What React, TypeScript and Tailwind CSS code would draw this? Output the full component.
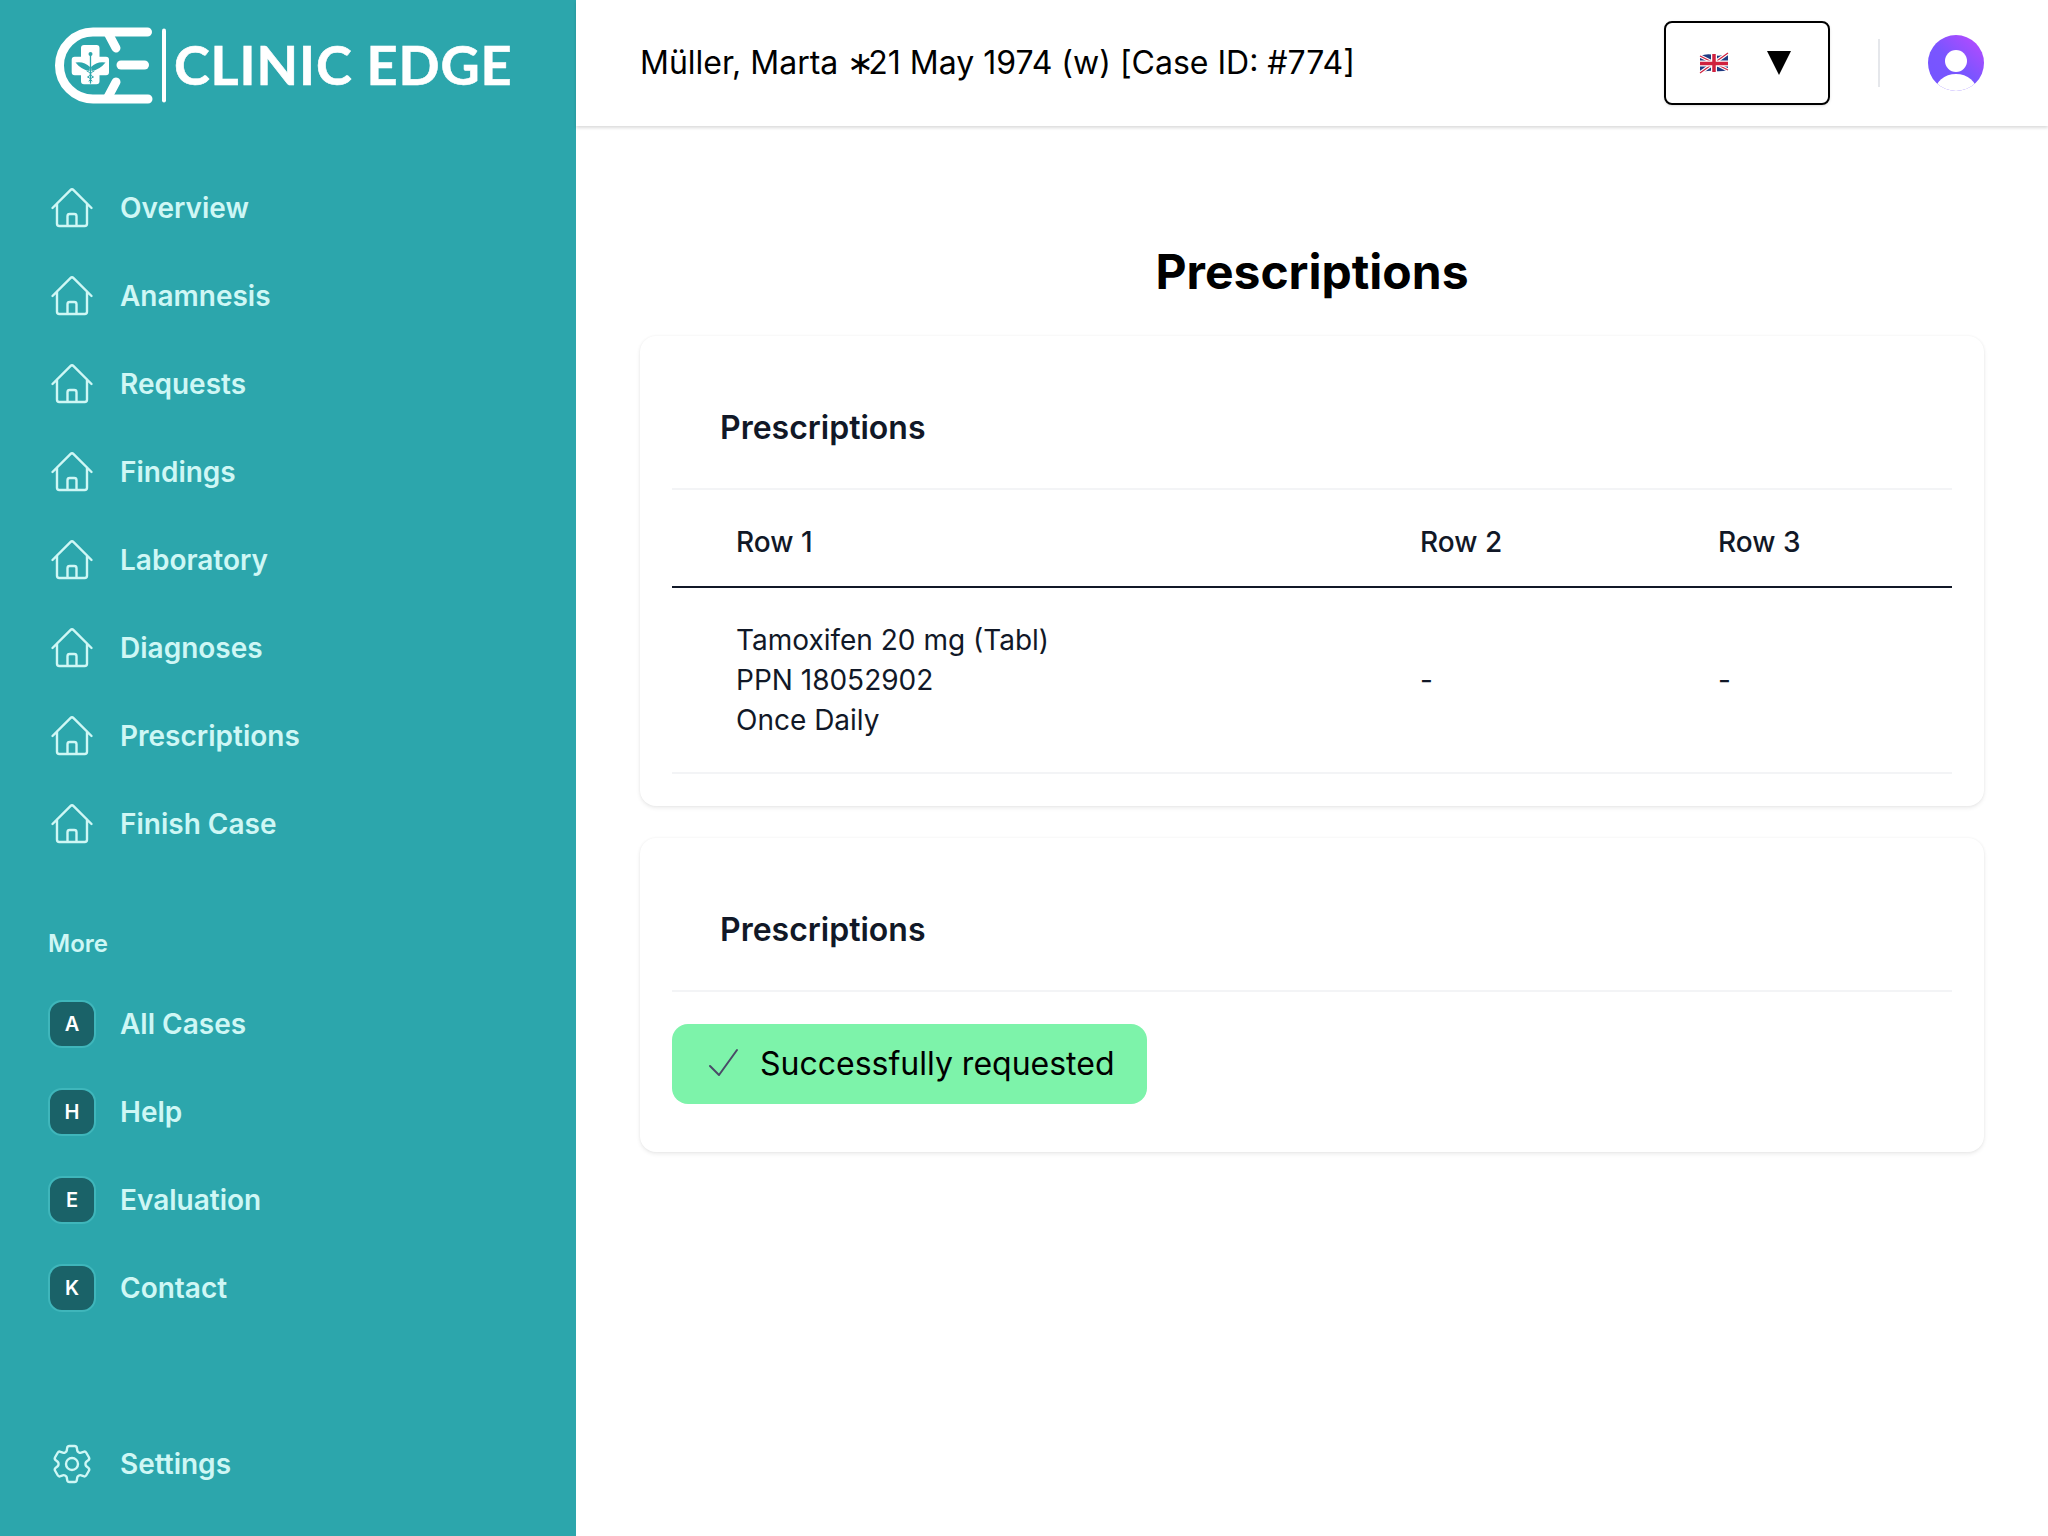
import React from 'react';
import { HiOutlineHome, HiOutlineCog6Tooth } from 'react-icons/hi2';

const mainNav = ['Overview', 'Anamnesis', 'Requests', 'Findings', 'Laboratory', 'Diagnoses', 'Prescriptions', 'Finish Case'];
const moreNav = [
  { letter: 'A', label: 'All Cases' },
  { letter: 'H', label: 'Help' },
  { letter: 'E', label: 'Evaluation' },
  { letter: 'K', label: 'Contact' },
];

function Logo() {
  return (
    <svg width="116" height="78" viewBox="52 26 116 78" className="shrink-0">
      <g fill="none" stroke="#fff" strokeWidth="9" strokeLinecap="round">
        <path d="M147.5 32 H93 A33.5 33.5 0 0 0 93 99 H148" />
        <path d="M108 33 L116 48" />
        <path d="M116 82 L108 97" />
        <path d="M121 65 H144.5" />
      </g>
      <path
        d="M84 45 h12.5 a3 3 0 0 1 3 3 v8.7 h6.5 a3 3 0 0 1 3 3 v12.6 a3 3 0 0 1 -3 3 h-6.5 v6 a3 3 0 0 1 -3 3 h-12.5 a3 3 0 0 1 -3 -3 v-6 h-6.3 a3 3 0 0 1 -3 -3 v-12.6 a3 3 0 0 1 3 -3 h6.3 v-8.7 a3 3 0 0 1 3 -3 z"
        fill="#fff"
      />
      <g fill="#2ca6ac">
        <circle cx="90.5" cy="54" r="2" />
        <path d="M75.5 62.5 Q84 61 90 67 L89.5 71 Q81 69.5 75.5 62.5 Z" />
        <path d="M105.5 62.5 Q97 61 91 67 L91.5 71 Q100 69.5 105.5 62.5 Z" />
      </g>
      <g fill="none" stroke="#2ca6ac" strokeLinecap="round">
        <path d="M90.5 55 V83" strokeWidth="1.3" />
        <path d="M87 71 Q94 74 87.5 77 Q93 79 89 81" strokeWidth="1" />
        <path d="M94 71 Q87 74 93.5 77 Q88 79 92 81" strokeWidth="1" />
      </g>
      <rect x="162" y="28.5" width="4" height="74" rx="2" fill="#fff" />
    </svg>
  );
}

function UkFlag() {
  return (
    <svg width="30" height="24" viewBox="0 0 30 24">
      <path d="M1 5 Q8 2 15 4 T29 2 V19 Q22 21 15 20 T1 22 Z" fill="#1f3a82" />
      <path d="M1 5 L29 19 M29 2 L1 22" stroke="#fff" strokeWidth="3.5" />
      <path d="M1 5 L29 19 M29 2 L1 22" stroke="#d0213f" strokeWidth="1.2" />
      <path d="M15 3 V21 M1 12.5 H29" stroke="#fff" strokeWidth="6" />
      <path d="M15 3 V21 M1 12.5 H29" stroke="#d0213f" strokeWidth="3.5" />
    </svg>
  );
}

function Avatar() {
  return (
    <svg width="56" height="56" viewBox="0 0 56 56">
      <defs>
        <linearGradient id="avatarFill" x1="0.2" y1="0.8" x2="0.8" y2="0.1">
          <stop offset="0" stopColor="#7655ff" />
          <stop offset="0.45" stopColor="#7a55ff" />
          <stop offset="1" stopColor="#ab4cff" />
        </linearGradient>
        <clipPath id="avatarClip">
          <circle cx="28" cy="28" r="28" />
        </clipPath>
      </defs>
      <circle cx="28" cy="28" r="28" fill="url(#avatarFill)" />
      <circle cx="28" cy="26" r="11" fill="#fff" />
      <ellipse cx="28" cy="57" rx="21" ry="18" fill="#fff" clipPath="url(#avatarClip)" />
    </svg>
  );
}

function Card({ children, className }: { children: React.ReactNode; className?: string }) {
  return <section className={`bg-white rounded-2xl px-8 shadow-[0_2px_4px_rgba(0,0,0,0.08),0_0_3px_rgba(0,0,0,0.05)] ${className ?? ''}`}>{children}</section>;
}

function CardTitle({ children }: { children: React.ReactNode }) {
  return (
    <div className="h-[154px] border-b-2 border-gray-100 pl-12 flex items-center pt-[31px]">
      <h2 className="text-[32px] font-semibold text-[#111827]">{children}</h2>
    </div>
  );
}

export default function App() {
  return (
    <div className="flex min-h-[1536px] bg-white font-['Inter',sans-serif]">
      <aside className="w-[576px] shrink-0 bg-[#2ca6ac] flex flex-col px-12 pb-7 text-[#cff7f5] text-[28px] font-semibold">
        <div className="h-[164px] pt-[26px] pl-1">
          <div className="flex items-center h-[78px]">
            <Logo />
            <span className="ml-[6px] text-[54px] leading-none font-bold text-white font-['Lato',sans-serif] tracking-[0.9px] whitespace-nowrap [-webkit-text-stroke:0.6px_white]">CLINIC EDGE</span>
          </div>
        </div>
        <nav className="flex flex-col">
          {mainNav.map((label) => (
            <a key={label} className="h-[88px] flex items-center gap-6">
              <HiOutlineHome className="w-12 h-12" strokeWidth={1.2} />
              {label}
            </a>
          ))}
        </nav>
        <p className="mt-[60px] text-2xl leading-8 h-[52px]">More</p>
        <nav className="flex flex-col">
          {moreNav.map((item) => (
            <a key={item.label} className="h-[88px] flex items-center gap-6">
              <span className="w-12 h-12 rounded-[14px] border-2 border-[#3fb6bb] bg-[#1a6268] text-white text-xl font-semibold flex items-center justify-center">{item.letter}</span>
              {item.label}
            </a>
          ))}
        </nav>
        <a className="mt-auto h-[88px] flex items-center gap-6">
          <HiOutlineCog6Tooth className="w-12 h-12" strokeWidth={1.2} />
          Settings
        </a>
      </aside>

      <div className="flex-1 min-w-0 flex flex-col">
        <header className="h-[126px] flex items-center pl-16 pr-16 shadow-[0_2px_3px_rgba(0,0,0,0.14)]">
          <p className="flex-1 text-[32px] text-black">
            Müller, Marta <span className="tracking-[-6px]">∗</span>21 May 1974 (w) [Case ID: #774]
          </p>
          <button className="w-[166px] h-[84px] border-2 border-black rounded-lg flex items-center pl-[33px] shadow-sm">
            <UkFlag />
            <svg width="24" height="24" viewBox="0 0 24 24" className="ml-[38px]">
              <path d="M0 0 H24 L12 24 Z" fill="#000" />
            </svg>
          </button>
          <div className="w-0.5 h-12 bg-gray-200 mx-12" />
          <Avatar />
        </header>

        <main className="px-16 pt-[115px]">
          <h1 className="text-center text-5xl leading-[62px] font-bold text-black mb-[33px]">Prescriptions</h1>
          <Card className="pb-8">
            <CardTitle>Prescriptions</CardTitle>
            <div className="text-[28px] leading-10 text-[#111827]">
              <div className="grid grid-cols-[684px_298px_1fr] h-[98px] pt-2 items-center border-b-2 border-[#111827] font-medium pl-16">
                <span>Row 1</span>
                <span>Row 2</span>
                <span>Row 3</span>
              </div>
              <div className="grid grid-cols-[684px_298px_1fr] h-[186px] items-center border-b-2 border-gray-100 pl-16">
                <span>
                  Tamoxifen 20 mg (Tabl)
                  <br />
                  PPN 18052902
                  <br />
                  Once Daily
                </span>
                <span>-</span>
                <span>-</span>
              </div>
            </div>
          </Card>
          <Card className="mt-8 pb-12">
            <CardTitle>Prescriptions</CardTitle>
            <div className="mt-8 w-[475px] h-20 rounded-2xl bg-[#7df3aa] flex items-center pl-[36px] gap-[20px]">
              <svg width="32" height="32" viewBox="0 0 32 32" fill="none" stroke="#4a4a68" strokeWidth="2" strokeLinecap="round" strokeLinejoin="round">
                <path d="M2 18 L11 27 L29 2" />
              </svg>
              <span className="text-[32px] text-black">Successfully requested</span>
            </div>
          </Card>
        </main>
      </div>
    </div>
  );
}
